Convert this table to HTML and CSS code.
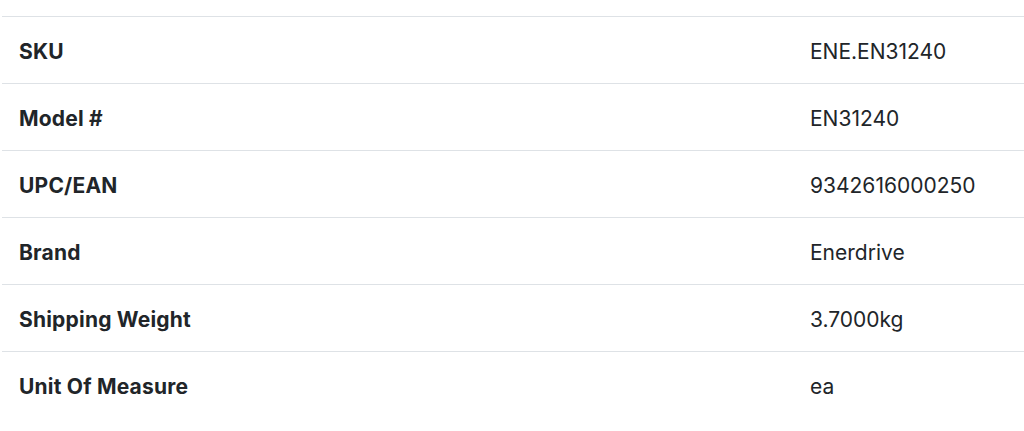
FILE: index.html
```html
<!DOCTYPE html>
<html lang="en">
<head>
<meta charset="utf-8">
<link rel="stylesheet" href="styles.css">
</head>
<body>
<div class="specs">
  <div class="row"><div class="label">SKU</div><div class="value">ENE.EN31240</div></div>
  <div class="row"><div class="label">Model #</div><div class="value">EN31240</div></div>
  <div class="row"><div class="label">UPC/EAN</div><div class="value">9342616000250</div></div>
  <div class="row"><div class="label">Brand</div><div class="value">Enerdrive</div></div>
  <div class="row"><div class="label">Shipping Weight</div><div class="value">3.7000kg</div></div>
  <div class="row"><div class="label">Unit Of Measure</div><div class="value">ea</div></div>
</div>
</body>
</html>
```
FILE: styles.css
```css
html, body {
  margin: 0;
  padding: 0;
  background: #ffffff;
}
body {
  font-family: Inter, "Liberation Sans", sans-serif;
  color: #212529;
  font-size: 21px;
  line-height: 30px;
}
.specs {
  padding: 16px 0 0 2px;
}
.row {
  display: grid;
  grid-template-columns: 791px 1fr;
  border-top: 1px solid #dee2e6;
}
.label, .value {
  padding: 20px 17px 16px;
}
.label {
  font-weight: 700;
  letter-spacing: 0.2px;
}
```
